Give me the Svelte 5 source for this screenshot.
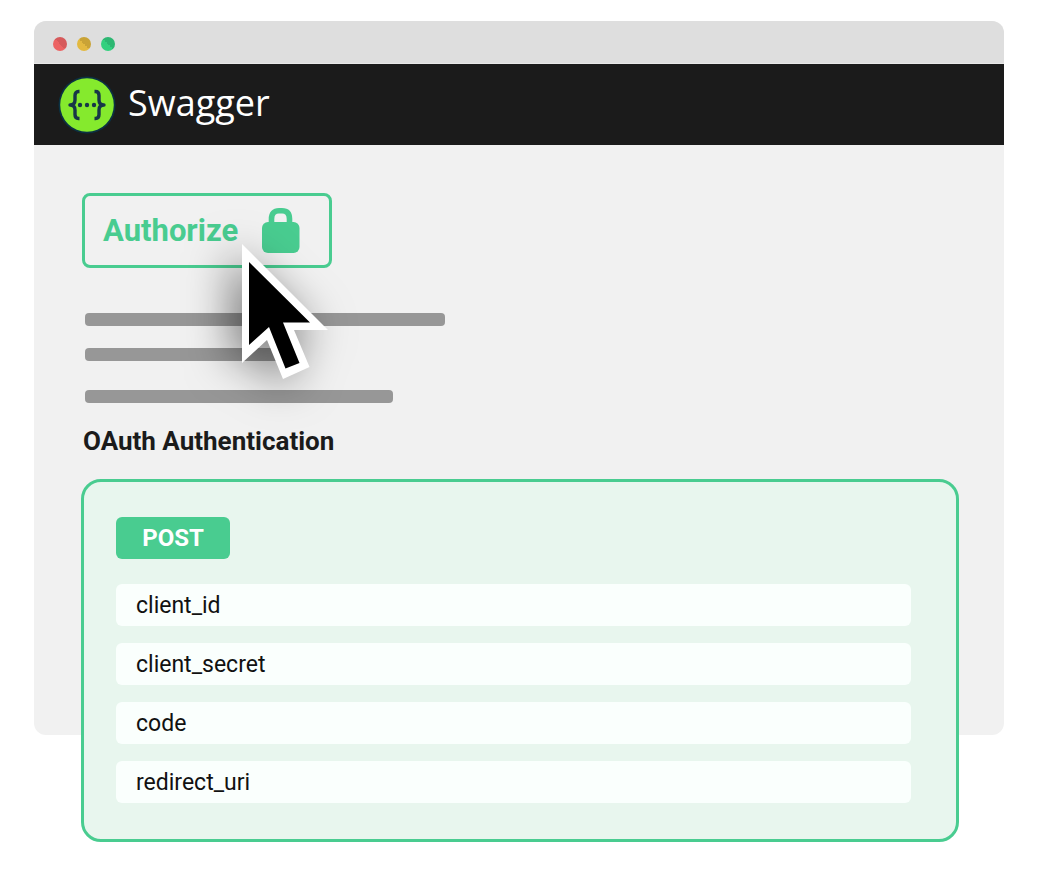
<script lang="ts">
  const fields = ['client_id', 'client_secret', 'code', 'redirect_uri']
</script>

<main class="window">
  <div class="titlebar" aria-hidden="true">
    <span class="dot dot--red"></span>
    <span class="dot dot--yellow"></span>
    <span class="dot dot--green"></span>
  </div>

  <header class="brand">
    <svg class="brand__logo" viewBox="0 0 58 58" aria-hidden="true">
      <circle cx="29" cy="29" r="28.5" fill="#0b3142" />
      <circle cx="29" cy="29" r="26.8" fill="#85ea2d" />
      <g fill="none" stroke="#173647" stroke-width="3.4" stroke-linejoin="round">
        <path d="M21.500 15.500h-1q-3.500 0-3.500 4v4.500q0 5-5 5q5 0 5 5v4.500q0 4 3.500 4h1" />
        <path d="M36.500 15.500h1q3.500 0 3.500 4v4.500q0 5 5 5q-5 0-5 5v4.500q0 4-3.500 4h-1" />
      </g>
      <g fill="#173647">
        <circle cx="22" cy="29" r="2.200" />
        <circle cx="29" cy="29" r="2.200" />
        <circle cx="36" cy="29" r="2.200" />
      </g>
    </svg>
    <span class="brand__name">Swagger</span>
  </header>

  <div class="content">
    <div class="authorize">
      <button type="button" class="authorize__button">
        <span>Authorize</span>
        <svg class="authorize__lock" viewBox="0 0 38 46" aria-hidden="true">
          <path fill="none" stroke="currentColor" stroke-width="5.600" d="M9.500 18v-7q0-8.200 7.500-8.200h3q7.500 0 7.500 8.200v7" />
          <rect y="14" width="37.500" height="31" rx="6" fill="currentColor" />
        </svg>
      </button>
      <svg class="cursor" viewBox="0 0 86 136" aria-hidden="true">
        <path fill="#fff" d="M0 0L86 86H52L67.500 123L41 135L25 96L0 119Z" />
        <path fill="#000" d="M7 18L68 78.500H41L57.500 119L43.500 124.500L27 83L7 101Z" />
      </svg>
    </div>

    <div class="lines" aria-hidden="true">
      <span class="line line--long"></span>
      <span class="line line--short"></span>
      <span class="line line--medium"></span>
    </div>

    <h1 class="heading">OAuth Authentication</h1>

    <form class="panel">
      <span class="method">POST</span>
      <div class="fields">
        {#each fields as field (field)}
          <input class="field" type="text" name={field} placeholder={field} aria-label={field} />
        {/each}
      </div>
    </form>
  </div>
</main>

<style>
  :global(body) {
    background: #fff;
  }

  .window {
    margin: 21px 46px 140px 34px;
    border-radius: 12px;
    background: #f1f1f1;
    font-family: Roboto, 'Liberation Sans', sans-serif;
  }

  .titlebar {
    display: flex;
    align-items: center;
    gap: 10px;
    height: 43px;
    padding: 3px 19px 0;
    box-sizing: border-box;
    border-radius: 12px 12px 0 0;
    border-bottom: 1px solid #e8e8e8;
    background: #dedede;
  }

  .dot {
    width: 14px;
    height: 14px;
    border-radius: 50%;
  }

  .dot--red {
    background: linear-gradient(45deg, #ec6363 50%, #d65a5b 50%);
  }

  .dot--yellow {
    background: linear-gradient(45deg, #e3b940 50%, #c9a336 50%);
  }

  .dot--green {
    background: linear-gradient(45deg, #33d07e 50%, #2db772 50%);
  }

  .brand {
    display: flex;
    align-items: center;
    gap: 12px;
    height: 81px;
    padding: 0 24px;
    background: #1b1b1b;
  }

  .brand__logo {
    width: 58px;
    height: 58px;
  }

  .brand__name {
    padding-bottom: 3px;
    color: #fff;
    font-family: 'Open Sans', 'Noto Sans', sans-serif;
    font-size: 36px;
    line-height: 48px;
  }

  /* the panel hangs out below the window, so its margin must stay in here */
  .content {
    display: flow-root;
    padding: 48px 45px 0 47px;
  }

  .authorize {
    position: relative;
    width: 250px;
    margin-left: 1px;
  }

  .authorize__button {
    display: flex;
    align-items: center;
    justify-content: space-between;
    width: 100%;
    height: 75px;
    padding: 0 29px 0 18px;
    border: 3px solid #49cc90;
    border-radius: 8px;
    background: transparent;
    color: #49cc90;
    font-family: inherit;
    font-size: 31px;
    font-weight: 700;
    cursor: pointer;
  }

  .authorize__lock {
    width: 38px;
    height: 46px;
  }

  .cursor {
    position: absolute;
    top: 51px;
    left: 160px;
    width: 86px;
    height: 136px;
    overflow: visible;
    filter: drop-shadow(-10px 6px 22px rgba(0, 0, 0, 0.5));
    pointer-events: none;
  }

  .lines {
    display: flex;
    flex-direction: column;
    gap: 22px;
    margin: 45px 4px 0;
  }

  .line {
    height: 13px;
    border-radius: 4px;
    background: #979797;
  }

  .line--long {
    width: 360px;
  }

  .line--short {
    width: 200px;
  }

  .line--medium {
    width: 308px;
    margin-top: 7px;
  }

  .heading {
    margin: 22px 2px;
    color: #1b1b1b;
    font-size: 26px;
    font-weight: 700;
    line-height: 32px;
  }

  .panel {
    margin-bottom: -107px;
    padding: 35px 45px 36px 32px;
    border: 3px solid #49cc90;
    border-radius: 20px;
    background: #e8f6ee;
  }

  .method {
    display: block;
    width: 114px;
    border-radius: 6px;
    background: #49cc90;
    color: #fff;
    font-size: 24px;
    font-weight: 700;
    line-height: 42px;
    text-align: center;
  }

  .fields {
    display: flex;
    flex-direction: column;
    gap: 17px;
    margin-top: 25px;
  }

  .field {
    width: 100%;
    height: 42px;
    padding: 0 20px;
    box-sizing: border-box;
    border: 0;
    border-radius: 6px;
    background: #fafffd;
    color: #111;
    font-family: inherit;
    font-size: 23px;
  }

  .field::placeholder {
    color: #111;
    opacity: 1;
  }
</style>
